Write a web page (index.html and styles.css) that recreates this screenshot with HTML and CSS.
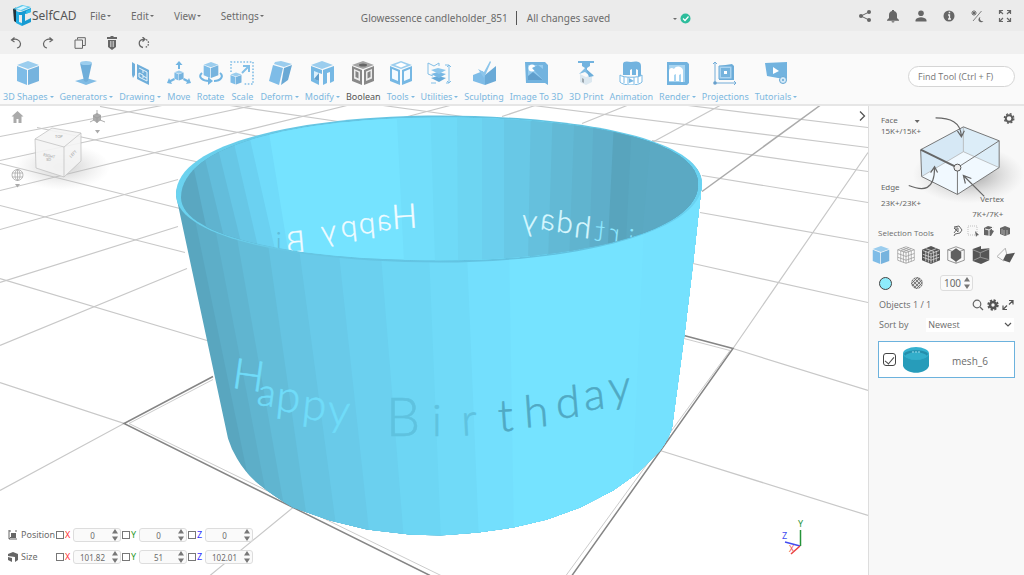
FILE: index.html
```html
<!DOCTYPE html>
<html lang="en">
<head>
<meta charset="utf-8">
<title>SelfCAD</title>
<link rel="stylesheet" href="styles.css">
</head>
<body>
<svg class="defs" aria-hidden="true">
  <symbol id="cube" viewBox="0 0 24 24"><path fill="#9bcdee" d="M12 0 23 4 12 8 1 4z"/><path fill="#7ebce7" d="M1 5 11 9v15L1 20z"/><path fill="#76b3de" d="M12 9 23 5v15l-11 4z"/></symbol>
  <symbol id="spin" viewBox="0 0 6 12"><path fill="#777" d="M3 0 6 4.500H0zM3 12 0 7.500h6z"/></symbol>
</svg>
<div class="app">
<header class="top">
  <a class="brand" href="#"><svg width="20" height="21" viewBox="0 0 20 21"><path fill="#20323c" d="M1 4 4 2.500 5 18 2 16z"/><path fill="#52c6ed" d="M1 4 10 0l9 2-9 4z"/><path fill="#d9f4fd" d="M4 4 11 1l5 1-7 3z"/><path fill="#20ade3" d="M4 6l3 1v10l3 1v3l-6-3z"/><path fill="#169ad2" d="m9 7 10-4v4l-6 2v7l6-3v4l-9 4V10H7V7z"/><path fill="#30bdec" d="m14 6 5-2v3l-5 2z"/></svg><span>SelfCAD</span></a>
  <nav class="menus"><button class="dd">File</button><button class="dd">Edit</button><button class="dd">View</button><button class="dd">Settings</button></nav>
  <div class="doc"><span>Glowessence candleholder_851</span><span class="saved">All changes saved</span></div>
  <button class="dd status" aria-label="Save status"><svg width="11" height="11" viewBox="0 0 11 11"><circle cx="5.500" cy="5.500" r="5" fill="#2dbd9c"/><path d="m3 5.500 2 2 3.500-4" fill="none" stroke="#fff" stroke-width="1.200"/></svg></button>
  <div class="tray">
    <button aria-label="Share"><svg width="14" height="14" viewBox="0 0 14 14"><path d="M11 3 3 7l8 4" fill="none" stroke="#666"/><g fill="#666"><circle cx="11" cy="3" r="2"/><circle cx="3" cy="7" r="2"/><circle cx="11" cy="11" r="2"/></g></svg></button>
    <button aria-label="Notifications"><svg width="14" height="14" viewBox="0 0 14 14"><path fill="#666" d="M6 1h2v1c2 .5 3 2 3 4v3l2 2v.7H1V11l2-2V6c0-2 1-3.500 3-4zM5.500 12.300h3a1.500 1.200 0 0 1-3 0z"/></svg></button>
    <button aria-label="Account"><svg width="14" height="14" viewBox="0 0 14 14"><circle cx="7" cy="4.300" r="2.800" fill="#666"/><path fill="#666" d="M1.500 12.500v-1.500C2 9 5 8.200 7 8.200s5 .8 5.500 2.800v1.500z"/></svg></button>
    <button aria-label="Information"><svg width="14" height="14" viewBox="0 0 14 14"><circle cx="7" cy="7" r="5.500" fill="#666"/><path d="M6 6h1.500v4M6 10h3M6.700 3.500h1.500" fill="none" stroke="#eee" stroke-width="1.300"/></svg></button>
    <button aria-label="Theme"><svg width="14" height="14" viewBox="0 0 14 14"><path d="M11.500 2 3 12M4 1v6M1 4h6M2 2l4 4M6 2 2 6" stroke="#666" stroke-width=".8"/><circle cx="4" cy="4" r="1.500" fill="#666"/><path fill="#666" d="M10.500 8a2.700 2.700 0 1 0 3 4 2.600 2.600 0 0 1-3-4"/></svg></button>
    <button aria-label="Full screen"><svg width="14" height="14" viewBox="0 0 14 14"><path d="M5 1.500H1.500V5M9 1.500h3.500V5M5 12.500H1.500V9M9 12.500h3.500V9M2 2l3 3M12 2 9 5M2 12l3-3M12 12 9 9" fill="none" stroke="#666" stroke-width="1.200"/></svg></button>
  </div>
</header>
<div class="edit">
  <button aria-label="Undo"><svg width="12" height="12" viewBox="0 0 12 12"><path d="M2 3c4-2 8 0 8.500 3.500 0 2-1 4-3.500 4.500M4.500.5 1.500 3l3 2" fill="none" stroke="#666" stroke-width="1.200"/></svg></button>
  <button aria-label="Redo"><svg width="12" height="12" viewBox="0 0 12 12"><path d="M10 3c-4-2-8 0-8.500 3.500 0 2 1 4 3.500 4.500M7.500.5l3 2.500-3 2" fill="none" stroke="#666" stroke-width="1.200"/></svg></button>
  <button aria-label="Copy"><svg width="12" height="12" viewBox="0 0 12 12"><path d="M3.500 2.500V.7h7.800v7.800H9M1 3h7.500v8.300H1z" fill="none" stroke="#666"/></svg></button>
  <button aria-label="Delete"><svg width="12" height="14" viewBox="0 0 12 14"><path fill="#666" d="M4.500 0h3v1H11v2H1V1h3.500zM2 4h8v7l-4 3-4-3z"/><path d="M4.500 5v6M6 5v6M7.500 5v6" stroke="#eee" stroke-width=".6"/></svg></button>
  <button aria-label="Rotate view"><svg width="12" height="12" viewBox="0 0 12 12"><path d="M5 10.500C0 9.500 0 3 5 2.300h1.500M4.500 0 7 2.300 4.500 4.500" fill="none" stroke="#666" stroke-width="1.300"/><path d="M8 2.500c4 2 3 7-1 8" fill="none" stroke="#666" stroke-width="1.300" stroke-dasharray="1.500 1.300"/></svg></button>
</div>
<div class="tools">
  <div class="ribbon">
  <button><svg class="ic"><use href="#cube"/></svg><span class="dd">3D Shapes</span></button>
  <button><svg class="ic" viewBox="0 0 24 24"><path fill="#80bce5" d="m1 20 11-3 11 3-11 4z"/><path fill="#6faeda" d="M6 2c3 2 9 2 12 0l-4 18-2 1-2-1z"/><ellipse cx="12" cy="2" rx="6" ry="2" fill="#9bcdee"/></svg><span class="dd">Generators</span></button>
  <button><svg class="ic" viewBox="0 0 24 24"><path fill="#6faeda" d="M4 1 7 3v11l-2 3-1-3zM9 3l12 6v15L9 18z"/><path d="m11 7 8 4v9l-8-4v-4l4 2v3m0-5V9m0 6 4 2" fill="none" stroke="#e7f4fc"/></svg><span class="dd">Drawing</span></button>
  <button><svg class="ic" viewBox="0 0 24 24"><path fill="#72b5e2" d="m12 0 3.500 4H13v4h-2V4H8.500zM0 22l2-5 1 2 4-2 1 2-4 2 1 2zM24 22l-2-5-1 2-4-2-1 2 4 2-1 2z"/><svg x="7" y="9" width="10" height="11"><use href="#cube"/></svg></svg><span>Move</span></button>
  <button><svg class="ic" viewBox="0 0 24 24"><svg x="4" y="0" width="16" height="18"><use href="#cube"/></svg><path d="M3 12c-5 4 1 8 7 8m5 0c7 0 10-5 6-8" fill="none" stroke="#72b5e2" stroke-width="2"/><path fill="#72b5e2" d="m9 16 5 4-5 4z"/></svg><span>Rotate</span></button>
  <button><svg class="ic" viewBox="0 0 24 24"><path d="M1 11V1h22v22H14" fill="none" stroke="#82bfe7" stroke-width="1.600" stroke-dasharray="1.600 1.600"/><svg x="0" y="11" width="12" height="13"><use href="#cube"/></svg><path d="m12 12 6-6M13 5h6v6" fill="none" stroke="#82bfe7" stroke-width="2"/></svg><span>Scale</span></button>
  <button><svg class="ic" viewBox="0 0 24 24"><path fill="#9bcdee" d="m7 1 6-1 11 3-8 3-10-3z"/><path fill="#7ebce7" d="m5 4 10 3-4 17-10-4z"/><path fill="#6aa9d5" d="m16 7 8-3-4 15-7 5z"/></svg><span class="dd">Deform</span></button>
  <button><svg class="ic" viewBox="0 0 24 24"><path fill="#9bcdee" d="m12 0 11 4-11 4L1 4z"/><path fill="#76b8e4" d="m1 5 11 4v4l-3-1v12l-8-4zm12 4 11-4v15l-4 2V11l-3 1v10l-4 2z"/><path fill="#dceffb" d="m4 10 5 2v8l-5-2z"/><path fill="#609dca" d="m4 18 5-6v8z"/></svg><span class="dd">Modify</span></button>
  <button class="active"><svg class="ic" viewBox="0 0 24 24"><path fill="#a6a6a6" d="m12 0 11 4-11 4L1 4z"/><path fill="#898989" d="m1 5 10 4v15L1 20zM13 9l10-4v15l-10 4z"/><path fill="#ececec" d="m3 8 6 2.500V20l-6-2.500zm12 2.500L21 8v9.500L15 20z"/><path fill="#858585" d="m4.500 10 3 1.500v6l-3-1.500zm12 1.500 3-1.500v6l-3 1.500z"/><ellipse cx="12" cy="4" rx="4" ry="1.500" fill="#666"/></svg><span>Boolean</span></button>
  <button><svg class="ic" viewBox="0 0 24 24"><path fill="#9bcdee" d="m12 0 11 4-11 4L1 4z"/><path fill="#fff" d="m12 1.500 6 2.500-6 2.500L6 4z"/><path fill="#76b8e4" d="m1 5 10 4v15L1 20zM13 9l10-4v15l-10 4z"/><path fill="#f3faff" d="m3 8 6 2.500V20l-6-2.500zm12 2.500L21 8v9.500L15 20z"/></svg><span class="dd">Tools</span></button>
  <button><svg class="ic" viewBox="0 0 24 24"><path d="m1 2 6 3 5-3v3M1 2v11l5 2M18 4h4v18h-3M20 6l2-2 2 2m-4 14 2 2 2-2M4 22h5" fill="none" stroke="#82bfe7"/><path fill="#67aad9" d="m4 17 7-2 8 2-7 4z"/><path fill="#78b8e4" d="m4 13 7-2 8 2-7 4z"/><path fill="#8cc6ec" d="m4 9 7-2 8 2-7 4z"/></svg><span class="dd">Utilities</span></button>
  <button><svg class="ic" viewBox="0 0 24 24"><path fill="#7ebce7" d="m1 14 10-4v5l2-1v10L1 20z"/><path fill="#6aaad7" d="m13 14 11-9v15l-11 4z"/><path fill="#8bc5eb" d="m6 8 6 3L18 0l1 1-7 16z"/></svg><span>Sculpting</span></button>
  <button><svg class="ic" viewBox="0 0 24 24"><path fill="#72b3df" d="M1 1h20l3 3v20l-3-2H2z"/><path fill="#94cbef" d="M4 4h15v15H4z"/><circle cx="8" cy="7" r="3.500" fill="#fff"/><path fill="#609fcd" d="m4 15 5-4 10 8H4z"/><path fill="#72b3df" d="m8 7 6-3 5 4v11z"/></svg><span>Image To 3D</span></button>
  <button><svg class="ic" viewBox="0 0 24 24"><path fill="#72b3df" d="M4 0h16v2H4zM8 2h8v3l-3 2v2h-2V7L8 5z"/><path fill="#7fbce4" d="m5 13 6-6 8 7-3 1-5-4z"/><path fill="#dce8f0" d="m6 13 6 3v8l-6-3zm6 3 6-2v7l-6 3z"/><path fill="#6daeda" d="m12 8 8 7-5 1z"/><path fill="#9fa9b0" d="m8 17 2 1v4l-2-1z"/></svg><span>3D Print</span></button>
  <button><svg class="ic" viewBox="0 0 24 24"><path fill="#72b3df" d="M4 12V3c0-3 4-3 8-2 5-1 10-1 10 4v10h-3V9l-2-1v6h-4V8l-2 1v5H4z"/><path fill="#fff" stroke="#78b8e3" d="M1 14c3 3 19 3 22 0v7c-3 4-19 4-22 0zM5 16v6M9 16v7M15 16v7M19 16v6"/><path fill="#78b8e3" d="m10 17 5 3-5 2z"/></svg><span>Animation</span></button>
  <button><svg class="ic" viewBox="0 0 24 24"><path fill="#72b3df" d="M2 1h20l2 2v19l-2 2H2z"/><path fill="#a8d5f1" d="M4 4h16v17H4z"/><path fill="#fff" d="M4 20V10c0-3 3-4 5-2 2-4 8-3 9 1v12h-2v-8l-2 1v6h-3v-7l-2 1v6z"/></svg><span class="dd">Render</span></button>
  <button><svg class="ic" viewBox="0 0 24 24"><path d="M2 22V1M0 3l2-2 2 2M2 22h21m-2-2 2 2-2 2" fill="none" stroke="#72acd8"/><circle cx="2" cy="22" r="1.800" fill="#689fcb"/><path fill="#6dadd9" d="m6 5 13-2 2 2v14H6z"/><path fill="#a9d3f0" stroke="#6aaad7" d="M6 5h13v13H6z"/><path fill="#75b3dd" d="M8 7h9v9H8z"/><path fill="#fff" d="M11 10h3v3h-3z"/></svg><span>Projections</span></button>
  <button><svg class="ic" viewBox="0 0 24 24"><path fill="#72b3df" d="m1 2 22-1v17l-9-1-11-2z"/><path fill="#fff" d="m9 6 6 4-6 3z"/><circle cx="19" cy="19" r="3.500" fill="#d3e9f8" stroke="#65a6d3"/><circle cx="19" cy="19" r="1" fill="#65a6d3"/></svg><span class="dd">Tutorials</span></button>
  </div>
  <input class="find" aria-label="Find tool" placeholder="Find Tool (Ctrl + F)">
</div>
<main class="work">
<section class="scene">
<svg class="view" viewBox="0 105 868 470" preserveAspectRatio="xMidYMid slice">
  <defs>
    <clipPath id="body"><path id="bodyPath" d="M176 195 228 438Q231 448 237 458 245 472 258 483 274 496 293 507L330 520 367 529 410 534 440 535 478 532 513 527 547 519 580 507 613 490 637 473 660 450Q669 438 672 427L685 330 693 263 702 182C702 95 176 100 176 195z"/></clipPath>
    <clipPath id="inner"><path d="M181 197C181 140 315 117 440 117S698 135 698 184 570 260 440 260 181 239 181 197z"/></clipPath>
    <linearGradient id="rim" x1="0" x2="1" y1="0" y2="0"><stop offset="0" stop-color="#6bd3f0"/><stop offset=".25" stop-color="#66c5e2"/><stop offset=".5" stop-color="#63c4e3"/><stop offset=".75" stop-color="#61c1df"/><stop offset="1" stop-color="#6ad3f2"/></linearGradient>
  </defs>
  <g fill="none" stroke="#c8c8c8" stroke-width="1.200">
    <path d="M0 136 162 105M0 160 253 105M0 190 347 105M0 229 178 179M400 118 450 105M0 282 178 226M502 116 535 105M582 123 627 105M652 142 720 105M0 345 187 268"/>
    <path d="M100 106 270 138M37 127 205 163M0 163 180 208M230 105 345 122M383 105 470 117M533 105 868 147M652 140 868 171M688 105 868 127M702 175 868 202M700 212 868 242M693 263 868 302M0 205 185 252M0 278 207 340M0 382 124 423 0 490M293 507 210 575"/>
    <path d="M660 450 868 515M733 348 868 390M733 348 868 152"/>
  </g>
  <path d="M702 191 820 105" stroke="#aaa" stroke-width="1.500"/>
  <path d="M213 379 129 423 480 594M684 338 730 350 566 575" fill="none" stroke="#ccc"/>
  <path d="M213 376 124 423 430 575M684 335 733 348 572 575" fill="none" stroke="#858585" stroke-width="1.500"/>
  <g clip-path="url(#body)">
    <path fill="#59a6bf" d="M170 100h540v440H170z"/>
    <path fill="#5daec8" d="M187 180 261 540H720V180z"/>
    <path fill="#60b5d0" d="M206 180 275 540H720V180z"/>
    <path fill="#63bdd9" d="M227 180 290 540H720V180z"/>
    <path fill="#66c4e2" d="M259 180 310 540H720V180z"/>
    <path fill="#69cae9" d="M290 180 338 540H720V180z"/>
    <path fill="#6bd0ef" d="M331 180 370 540H720V180z"/>
    <path fill="#6dd6f4" d="M375 180 404 540H720V180z"/>
    <path fill="#70daf8" d="M426 180 441 540H720V180z"/>
    <path fill="#73dffd" d="M464 180 479 540H720V180z"/>
    <path fill="#75e3ff" d="M508 180 514 540H720V180z"/>
    <path fill="#74e1fe" d="M646 180 630 540H720V180z"/>
  </g>
  <path fill="url(#rim)" d="M176 195C174 139 315 115 440 115S703 135 702 184 570 262 440 262 178 240 176 195z"/>
  <g clip-path="url(#inner)">
    <path fill="#5aa7c1" d="M170 100h540v170H170z"/>
    <path fill="#5fb3cf" d="M190 150 208 235H720V100H190z"/>
    <path fill="#63bddb" d="M203 150 226 245H720V100H203z"/>
    <path fill="#67c7e6" d="M216 140 243 250H720V100H216z"/>
    <path fill="#6bd1f1" d="M231 130 260 255H720V100H231z"/>
    <path fill="#70dbfa" d="M247 125 277 258H720V100H247z"/>
    <path fill="#75e3ff" d="M267 120 290 262H720V100H267z"/>
    <path fill="#72defb" d="M396 100 404 262H720V100z"/>
    <path fill="#6fdaf7" d="M430 100 435 262H720V100z"/>
    <path fill="#6dd5f2" d="M457 100 458 262H720V100z"/>
    <path fill="#6bcfee" d="M482 100V262H720V100z"/>
    <path fill="#68c8e6" d="M504 100V262H720V100z"/>
    <path fill="#65c0dd" d="M531 100 528 262H720V100z"/>
    <path fill="#62b9d5" d="M553 100 548 262H720V100z"/>
    <path fill="#60b4cf" d="M575 100 569 262H720V100z"/>
    <path fill="#5eaeca" d="M594 100 589 262H720V100z"/>
    <path fill="#58a4bd" d="M615 100 607 262H720V100z"/>
    <path fill="#5aa8c1" d="M633 100 625 262H720V100z"/>
    <path fill="#5ba9c3" d="M654 100 640 262H720V100z"/>
    <g class="mirrored">
      <g fill="#f2fcff" stroke="#f2fcff"><text transform="translate(418 227) rotate(-4) scale(-1 1)" font-size="34">H</text><text transform="translate(392 229) rotate(-5) scale(-1 1)">a</text><text transform="translate(376 232) rotate(-5) scale(-1 1)">p</text><text transform="translate(358 235) rotate(-6) scale(-1 1)">p</text><text transform="translate(337 240) rotate(-6) scale(-1 1)">y</text><text transform="translate(306 251) rotate(-5) scale(-1 1)">B</text><text transform="translate(282 252) scale(-1 1)" fill="#60bddb" stroke="none">i</text></g>
      <g fill="#d9f8ff" stroke="#d9f8ff"><text transform="translate(536 231) rotate(6) scale(-1 1)">y</text><text transform="translate(554 230) rotate(6) scale(-1 1)">a</text><text transform="translate(572 233) rotate(6) scale(-1 1)">d</text><text transform="translate(590 238) rotate(6) scale(-1 1)">h</text></g>
      <g fill="#8de7ff"><text transform="translate(604 241) rotate(6) scale(-1 1)">t</text><text transform="translate(619 244) rotate(6) scale(-1 1)">r</text><text transform="translate(633 250) rotate(6) scale(-1 1)">i</text></g>
    </g>
  </g>
  <g class="engraved" fill="#70dcf9" stroke="#70dcf9">
    <text transform="translate(231 387) rotate(8)" font-size="42">H</text><text transform="translate(256 404) rotate(8)" font-size="38">a</text><text transform="translate(275 410) rotate(6)">p</text><text transform="translate(301 418) rotate(6)">p</text><text transform="translate(327 424) rotate(4)">y</text>
    <g fill="#5fc2df" stroke="#5fc2df"><text transform="translate(386 435)" font-size="54">B</text><text transform="translate(432 435)">i</text><text transform="translate(462 435) rotate(-3)">r</text></g>
    <g fill="#50a9c4" stroke="#50a9c4"><text transform="translate(499 431) rotate(-4)">t</text><text transform="translate(525 427) rotate(-4)">h</text><text transform="translate(557 418) rotate(-5)">d</text><text transform="translate(585 410) rotate(-6)">a</text><text transform="translate(610 402) rotate(-6)">y</text></g>
  </g>
</svg>
<svg class="nav" width="130" height="100" viewBox="0 105 130 100">
  <defs><radialGradient id="shade"><stop offset="0" stop-color="#aaa" stop-opacity=".6"/><stop offset="1" stop-color="#ccc" stop-opacity="0"/></radialGradient></defs>
  <ellipse cx="62" cy="166" rx="48" ry="23" fill="url(#shade)"/>
  <path fill="#aaa" d="m17.500 110 6 5.500h-2v6.500h-3v-4h-2v4h-3v-6.500h-2z"/>
  <path fill="#f4f4f4" fill-opacity=".9" stroke="#bbb" stroke-width=".7" d="m35 138 17-11 29 5v28l-17 16-28-9z"/><path fill="none" stroke="#bbb" stroke-width=".7" d="m35 138 29 8 17-14M64 146v30"/>
  <g fill="#999" font-size="4"><text x="43" y="155" transform="rotate(12 43 155)">RIGHT</text><text x="46" y="160">3D</text><text x="55" y="137">TOP</text><text transform="translate(71 157) rotate(-45)">LEFT</text></g>
  <path fill="#aaa" d="m97 112 4 2v5l-4 3-4-3v-5z"/><path d="M97 109v5M90 121l4-2m11 2-5-2M93 115l4 2 4-2m-4 2v5" fill="none" stroke="#999" stroke-width=".8"/><path fill="#aaa" d="M95 129h5l-2.500 3.500z"/>
  <g fill="none" stroke="#aaa" stroke-width=".8"><circle cx="17.500" cy="174" r="5.500"/><ellipse cx="17.500" cy="174" rx="2.500" ry="5.500"/><path d="M12 172h11M12 176h11M17.500 168v12"/></g><path fill="#aaa" d="M15 183h5l-2.500 3.500z"/>
</svg>
<form class="coords">
  <div class="line"><svg width="10" height="10" viewBox="0 0 10 10"><path d="M1 0v9h8M1 1h2M8 0v2M1 9l2-2" fill="none" stroke="#666"/><path fill="#666" d="M3 3h5v5H3z"/></svg><b>Position</b>
    <label class="x"><input type="checkbox">X</label><span class="num"><input aria-label="Position X" value="0"><svg><use href="#spin"/></svg></span>
    <label class="y"><input type="checkbox">Y</label><span class="num"><input aria-label="Position Y" value="0"><svg><use href="#spin"/></svg></span>
    <label class="z"><input type="checkbox">Z</label><span class="num"><input aria-label="Position Z" value="0"><svg><use href="#spin"/></svg></span></div>
  <div class="line"><svg width="10" height="10" viewBox="0 0 10 10"><path fill="#666" d="m0 2 5-2 5 2v6L7 10V5L0 4zm0 3 4 1v4L0 8z"/></svg><b>Size</b>
    <label class="x"><input type="checkbox">X</label><span class="num"><input aria-label="Size X" value="101.82"><svg><use href="#spin"/></svg></span>
    <label class="y"><input type="checkbox">Y</label><span class="num"><input aria-label="Size Y" value="51"><svg><use href="#spin"/></svg></span>
    <label class="z"><input type="checkbox">Z</label><span class="num"><input aria-label="Size Z" value="102.01"><svg><use href="#spin"/></svg></span></div>
</form>
<svg class="axes" width="40" height="44" viewBox="776 515 40 44"><g fill="none" stroke-width="1.500"><path stroke="#26943a" d="M800.500 546v-16"/><path stroke="#424cf0" d="m800 546-15-4"/><path stroke="#e94141" d="m800 546-9 8"/></g><g font-size="9"><text x="798" y="527" fill="#26943a">Y</text><text x="782" y="539" fill="#424cf0">Z</text><text x="789" y="552" fill="#ee5555">X</text></g></svg>
<button class="collapse" aria-label="Collapse panel"><svg width="12" height="12" viewBox="0 0 12 12"><path d="m4 1.500 4.500 4.500L4 10.500" fill="none" stroke="#555" stroke-width="1.300"/></svg></button>
</section>
<aside class="side">
  <svg class="pick" viewBox="868 105 156 117">
    <defs><radialGradient id="dark"><stop offset="0" stop-color="#777" stop-opacity=".75"/><stop offset="1" stop-color="#bbb" stop-opacity="0"/></radialGradient></defs>
    <ellipse cx="968" cy="174" rx="56" ry="29" fill="url(#dark)"/>
    <path fill="#e9f5fe" d="m920 149 43-23 36 14v27l-42 27-36-18z"/><path fill="#d6e8f5" d="m920 149 43-23v25l-42 25z"/><path fill="#dcedf8" d="m963 126 36 14v27l-36-16z"/><path fill="#f3faff" fill-opacity=".8" d="m921 176 42-25 36 16-42 27z"/>
    <path fill="none" stroke="#aaa" stroke-width=".7" d="M963 126v25l36 16m-36-16-42 25"/><path fill="none" stroke="#777" d="m920 149 43-23 36 14v27l-42 27-36-18zM957 194v-27l42-27"/><path stroke="#666" stroke-width="2" d="m920 149 37 18"/>
    <circle cx="957" cy="167" r="3.500" fill="#eee" stroke="#555"/>
    <path fill="none" stroke="#666" stroke-width="1.200" d="M935 117c15 0 25 4 26 18m-4-5 4 6 3-6M908 185c15 6 26 5 26-18m-4 5 4-6 3 6M984 196l-20-20m1 7-2-8 8 3"/>
    <g><text x="880" y="122">Face</text><text x="880" y="133">15K+/15K+</text><text x="880" y="190">Edge</text><text x="880" y="206">23K+/23K+</text><text x="980" y="202">Vertex</text><text x="972" y="217">7K+/7K+</text></g>
    <path fill="#666" d="M914 119h5l-2.500 3z"/><circle cx="1009" cy="117.500" r="3.300" fill="none" stroke="#5c5c5c" stroke-width="2"/><circle cx="1009" cy="117.500" r="4.700" fill="none" stroke="#5c5c5c" stroke-width="1.500" stroke-dasharray="2 1.700"/>
  </svg>
  <div class="row sel"><span>Selection Tools</span><div class="minis">
    <button aria-label="Lasso"><svg viewBox="0 0 12 12"><path d="m3 2 5-1 3 4-2 3-5 1-1 2m0-3 3-4m-3-1h4v4z" fill="none" stroke="#666"/></svg></button>
    <button aria-label="Rectangle"><svg viewBox="0 0 12 12"><path d="M1 1h9v9H1z" fill="none" stroke="#aaa" stroke-width=".7" stroke-dasharray="1 1"/><path fill="#666" d="m8 6 4 4-2 .5L9 12z"/></svg></button>
    <button aria-label="Select volume"><svg viewBox="0 0 12 12"><path fill="#666" d="m1 3 4-2 4 1v3l2 1-3 5-7-1z"/><path d="m2 4 4 1v6m0-6 5-3" fill="none" stroke="#eee"/></svg></button>
    <button aria-label="Select loop"><svg viewBox="0 0 12 12"><path fill="#666" d="m1 3 5-2 5 2v6l-5 2-5-2z"/><path d="M3 4v5m2-4v5m3-5v5" stroke="#ccc" stroke-width=".7"/></svg></button></div></div>
  <div class="row modes">
    <button aria-label="Solid"><svg><use href="#cube"/></svg></button>
    <button aria-label="Wireframe"><svg viewBox="0 0 24 24"><path fill="#fff" stroke="#999" d="m12 1 11 4v14l-11 4-11-4V5zM1 5l11 4 11-4M12 9v14M1 10l11 4 11-4M1 15l11 4 11-4M5 6.500v14M8.500 8v14M15.500 8v14M19 6.500v14M5 3.500l11 4M8 2l11 4M16 2 5 6.500M19 3.500 8 8"/></svg></button>
    <button aria-label="Solid and wireframe"><svg viewBox="0 0 24 24"><path fill="#555" d="m12 0 12 5v14l-12 5-12-5V5z"/><path fill="none" stroke="#ddd" d="m1 6 11 4 11-4M12 10v13M1 11l11 4 11-4M1 15l11 4 11-4M5 6.500v14M8.500 8v14M15.500 8v14M19 6.500v14M5 3.500l11 4M19 3.500 8 8"/></svg></button>
    <button aria-label="Bounding box"><svg viewBox="0 0 24 24"><path fill="none" stroke="#777" d="m12 1 11 4v14l-11 4-11-4V5zM1 5l11 4 11-4M12 9v14"/><path fill="#606060" d="m5 8 7-5 7 5v8l-7 5-7-5z"/></svg></button>
    <button aria-label="Section"><svg viewBox="0 0 24 24"><path fill="#555" d="m1 4 11-4v4l11-1v16l-11 5-11-4z"/><path fill="none" stroke="#aaa" d="m1 5 10 4 12-5M11 9v6l-9 4m9-4 11 3"/></svg></button>
    <button aria-label="Plane"><svg viewBox="0 0 24 24"><path fill="none" stroke="#999" d="M9 20 0 14 11 3l2 8"/><path fill="#555" d="m12 11 12-2-7 13-9-3z"/></svg></button>
  </div>
  <div class="row paint"><button class="swatch" aria-label="Colour"></button><button aria-label="Mesh texture"><svg width="12" height="12" viewBox="0 0 12 12"><circle cx="6" cy="6" r="5.500" fill="#ddd" stroke="#888" stroke-width=".6"/><path d="m1 3 8 8M3 1l8 8M6 0l5 6M0 6l6 6M9 1 1 9m10-6-8 8M6 1 1 6m10 0-5 5" stroke="#666" stroke-width=".8"/></svg></button><span class="num big"><input aria-label="Opacity" value="100"><svg><use href="#spin"/></svg></span></div>
  <div class="row objects"><span>Objects 1 / 1</span><div class="minis"><button aria-label="Search"><svg viewBox="0 0 12 12"><circle cx="5" cy="5" r="3.800" fill="none" stroke="#666" stroke-width="1.200"/><path d="m8 8 3 3" stroke="#666" stroke-width="1.300"/></svg></button><button aria-label="Object settings"><svg viewBox="0 0 12 12"><circle cx="6" cy="6" r="3" fill="none" stroke="#555" stroke-width="2.600"/><circle cx="6" cy="6" r="4.800" fill="none" stroke="#555" stroke-width="1.800" stroke-dasharray="2.200 1.570"/></svg></button><button aria-label="Expand"><svg viewBox="0 0 12 12"><path d="M7 1.500h4v4M11 1.500 7 5.500M5 10.500H1v-4M1 10.500l4-4" fill="none" stroke="#555" stroke-width="1.200"/></svg></button></div></div>
  <div class="row sort"><label for="sort">Sort by</label><select id="sort"><option>Newest</option></select><svg class="chev" width="8" height="6" viewBox="0 0 8 6"><path d="m1 1 3 3 3-3" fill="none" stroke="#555" stroke-width="1.200"/></svg></div>
  <label class="object"><input type="checkbox" checked><svg width="28" height="28" viewBox="0 0 28 28"><path fill="#279cba" d="M1 7v13c3 9 23 9 26 0V7z"/><ellipse cx="14" cy="7.500" rx="13" ry="6.500" fill="#36b1cf"/><path fill="#258fac" d="M2 8C4 3 24 3 26 8c-3 7-21 7-24 0z"/><path fill="#33aeca" d="M3 10c4-5 18-5 22 0-4 5-18 5-22 0z"/><path d="M10 6h8" stroke="#9adff0" stroke-dasharray="2 1"/></svg><span>mesh_6</span></label>
</aside>
</main>
</div>
</body>
</html>
```
FILE: styles.css
```css
* { box-sizing: border-box; }
body { margin: 0; font: 9px/14px "Noto Sans", "Open Sans", sans-serif; color: #6b6b6b; background: #fff; }
button { font: inherit; color: inherit; background: none; border: 0; padding: 0; margin: 0; display: flex; align-items: center; justify-content: center; }
input, select { font: inherit; color: inherit; margin: 0; min-width: 0; }
.defs { position: absolute; width: 0; height: 0; }
.app { height: 100vh; display: flex; flex-direction: column; overflow: hidden; }
.dd::after { content: ""; display: inline-block; border: 2px solid transparent; border-top-color: currentColor; border-bottom: 0; margin-left: 1px; vertical-align: middle; }

.top { height: 31px; flex: none; background: #ebebeb; display: flex; align-items: center; padding: 0 12px; }
.brand { display: flex; align-items: center; color: #555; text-decoration: none; font-size: 12px; width: 78px; }
.menus { display: flex; gap: 20px; font-size: 10px; }
.doc { display: flex; align-items: center; font-size: 10px; margin-left: 97px; padding-top: 4px; white-space: nowrap; }
.saved { border-left: 1px solid #555; margin-left: 8px; padding-left: 10px; }
.status { flex-direction: row-reverse; gap: 3px; margin-left: 62px; padding-top: 6px; }
.tray { display: flex; gap: 14px; margin-left: auto; }

.edit { height: 23px; flex: none; background: #f0f0f0; display: flex; align-items: center; gap: 20px; padding: 0 10px; }
.edit button { width: 12px; }
.edit svg { flex: none; }

.tools { height: 52px; flex: none; background: #fafafa; border-bottom: 2px solid #e6e6e6; display: flex; align-items: center; justify-content: space-between; padding: 0 9px 0 3px; }
.ribbon { display: flex; gap: 6px; color: #7db8df; white-space: nowrap; }
.ribbon button { flex-direction: column; gap: 5px; padding-top: 6px; }
.ribbon .dd::after { margin-left: 2px; }
.ic { width: 24px; height: 24px; }
.ribbon .active { color: #555; }
.find { width: 107px; height: 21px; margin-bottom: 6px; border: 1px solid #d5d5d5; border-radius: 11px; background: #fff; padding: 0 9px; font-family: "Open Sans", sans-serif; }
.find::placeholder { color: #777; opacity: 1; }

.work { flex: 1; display: flex; min-height: 0; }
.scene { flex: 1; position: relative; min-width: 0; background: #fff; overflow: hidden; }
.view { width: 100%; height: 100%; display: block; }
.mirrored { font: 300 30px "Lato", sans-serif; stroke-width: .4; }
.engraved { font: 300 44px "Lato", sans-serif; stroke-width: .6; }
.nav { position: absolute; left: 0; top: 0; }
.axes { position: absolute; right: 52px; bottom: 16px; }
.collapse { position: absolute; right: 0; top: 4px; width: 12px; height: 12px; }

.coords { position: absolute; left: 8px; bottom: 11px; display: grid; gap: 8px; }
.line { display: flex; align-items: center; height: 14px; }
.line > svg { flex: none; }
.line b { width: 38px; padding-left: 3px; font-weight: 400; white-space: nowrap; }
.line label { display: flex; align-items: center; gap: 1px; width: 17px; }
.line label input { appearance: none; width: 8px; height: 8px; border: 1px solid #777; }
.num { position: relative; width: 48px; height: 14px; margin-right: 1px; display: flex; }
.num input { width: 100%; height: 100%; border: 1px solid #ddd; border-radius: 3px; background: #fafafa; text-align: center; font-size: 8px; padding: 0 9px 0 0; }
.num svg { position: absolute; right: 3px; top: 1px; width: 6px; height: 12px; }
.x { color: #f33; } .y { color: #2a9a2a; } .z { color: #33f; }

.side { width: 156px; flex: none; background: #f8f8f8; border-left: 1px solid #ddd; }
.side svg { display: block; }
.pick { width: 100%; }
.pick text { font-size: 8px; fill: #666; }
.row { display: flex; align-items: center; padding: 0 10px; }
.sel { justify-content: space-between; font-size: 8px; height: 18px; padding: 3px 13px 0 9px; }
.sel span { font-family: "Open Sans", sans-serif; }
.sel .minis { margin-bottom: 4px; }
.minis { display: flex; gap: 4px; }
.minis svg { width: 12px; height: 12px; }
.objects .minis { gap: 3px; }
.objects, .sort, .object { font-family: "Open Sans", sans-serif; }
.modes { justify-content: space-between; padding: 0 9px 0 3px; height: 30px; }
.modes svg { width: 18px; height: 18px; }
.paint { height: 26px; gap: 19px; }
.swatch { width: 13px; height: 13px; border: 1px solid #444; border-radius: 50%; background: #8eecfc; }
.num.big { width: 33px; height: 16px; margin-left: -2px; }
.num.big input { font-size: 10px; padding-right: 8px; }
.num.big svg { top: 2px; }
.objects { justify-content: space-between; height: 17px; }
.sort { position: relative; height: 24px; }
.sort label { width: 48px; }
.sort select { appearance: none; background: #fff; border: 0; width: 89px; height: 14px; padding: 0 2px; }
.chev { position: absolute; right: 12px; top: 9px; }
.object { margin: 4px 9px 0; height: 37px; background: #fff; border: 1px solid #6cb2dd; display: flex; align-items: center; padding-left: 4px; font-size: 10px; }
.object input { appearance: none; width: 13px; height: 13px; border: 1px solid #444; border-radius: 3px; display: grid; place-items: center; }
.object input::after { content: ""; width: 4px; height: 8px; border: solid #444; border-width: 0 1px 1px 0; transform: rotate(40deg); }
.object svg { margin-left: 6px; }
.object span { margin: 3px 0 0 22px; }
```
